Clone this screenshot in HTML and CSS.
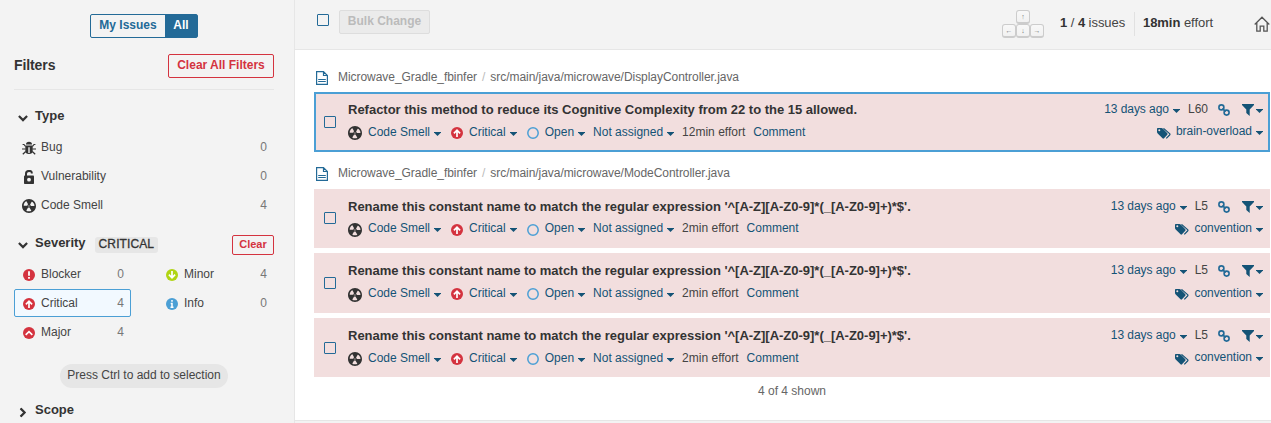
FILE: index.html
```html
<!DOCTYPE html>
<html lang="en">
<head>
<meta charset="utf-8">
<title>Issues</title>
<link rel="stylesheet" href="styles.css">
</head>
<body>
<svg class="defs" aria-hidden="true">
  <symbol id="smell" viewBox="2 2 12 12"><path fill="#333" d="M8 2C4.7 2 2 4.7 2 8s2.7 6 6 6 6-2.7 6-6-2.7-6-6-6zm-.5 5.5h.9v.9h-.9v-.9zm-3.8.2c-.1 0-.2-.1-.2-.2 0-.4.1-1.2.6-2S5.3 4.2 5.6 4c.2 0 .3 0 .3.1l1.3 2.3c0 .1 0 .2-.1.2-.1.2-.2.3-.3.5-.1.2-.2.4-.2.5 0 .1-.1.2-.2.2l-2.7-.1zM9.9 12c-.3.2-1.1.5-2 .5-.9 0-1.7-.3-2-.5-.1 0-.1-.2-.1-.3l1.3-2.3c0-.1.1-.1.2-.1.2.1.3.1.5.1s.4 0 .5-.1c.1 0 .2 0 .2.1l1.3 2.3c.2.2.2.3.1.3zm2.5-4.1L9.7 8c-.1 0-.2-.1-.2-.2 0-.2-.1-.4-.2-.5 0-.1-.2-.3-.3-.4-.1 0-.1-.1 0-.2l1.3-2.3c.1-.1.2-.1.3-.1.3.2 1 .7 1.5 1.5s.6 1.6.6 2c0 0-.1.1-.3.1z"/></symbol>
  <symbol id="critical" viewBox="0 0 12 12"><circle cx="6" cy="6" r="6" fill="#d4333f"/><path d="M6 10V3.400M2.900 6.300L6 3.200l3.100 3.100" fill="none" stroke="#fff" stroke-width="1.700"/></symbol>
  <symbol id="open" viewBox="0 0 12 12"><circle cx="6" cy="6" r="5.200" fill="none" stroke="#4b9fd5" stroke-width="1.500"/></symbol>
  <symbol id="caret" viewBox="0 0 7 4"><path d="M0 0h7v.600L3.500 4 0 .600z" fill="#145376"/></symbol>
  <symbol id="chain" viewBox="0 0 12 12"><g fill="none" stroke="#236a97" stroke-width="1.600"><circle cx="3.400" cy="3.400" r="2.500"/><circle cx="8.600" cy="8.600" r="2.500"/><path d="M4.400 4.400l3.200 3.200"/></g></symbol>
  <symbol id="funnel" viewBox="0 0 12 12"><path d="M0 0h12v1L7.700 5.600V12L4.300 9V5.600L0 1z" fill="#145376"/></symbol>
  <symbol id="tags" viewBox="0 0 14 11"><path fill="#145376" fill-rule="evenodd" d="M0 .8Q0 0 .8 0H4.400Q5.200 0 6 .8L10.300 5.200Q11 6 10.300 6.800L7 10.300Q6.300 11 5.500 10.300L.7 5.500Q0 4.800 0 4zM2.300 1.300a1 1 0 1 0 0 2 1 1 0 0 0 0-2z"/><path d="M6.500.4L12.600 5.600Q13.300 6.300 12.600 7L9.300 10.400" fill="none" stroke="#145376" stroke-width="1.200"/></symbol>
  <symbol id="file" viewBox="0 0 12 14"><path d="M.6.6H7.500L11.400 4.500V13.400H.6zM7.500.6V4.500H11.400M2.200 8.500h7.600M2.200 10.500h7.600" fill="none" stroke="#236a97" stroke-width="1.200"/></symbol>
  <symbol id="chev" viewBox="0 0 10 7"><path d="M.9 1L5 5.100 9.100 1" fill="none" stroke="#333" stroke-width="2.200"/></symbol>
</svg>
<div class="app">
  <aside class="side">
    <div class="toggle"><span class="mine">My Issues</span><span class="all">All</span></div>
    <div class="filters"><b>Filters</b><span class="red-btn">Clear All Filters</span></div>
    <div class="facet-head type"><svg class="chev"><use href="#chev"/></svg><b>Type</b></div>
    <div class="facet"><svg class="ico" viewBox="0 0 14 14"><path fill="#333" d="M4 3.500Q4 .8 7 .8T10 3.500zM3.300 4.500h7.400V10Q10.700 13 7 13T3.300 10z"/><path d="M7 6.200V12" stroke="#f3f3f3" stroke-width="1.400"/><path d="M.6 3.500H2L3.500 5.500M13.400 3.500H12L10.500 5.500M0 8H3.500M10.500 8H14M.8 13.300L3.700 10.500M13.200 13.300L10.300 10.500" fill="none" stroke="#333" stroke-width="1.200"/></svg><span>Bug</span><i>0</i></div>
    <div class="facet"><svg class="ico" viewBox="0 0 14 14"><path d="M4 6V3.800Q4 .9 7 .9T9.800 3.500" fill="none" stroke="#333" stroke-width="2"/><path fill="#333" d="M3 5.500H11.200Q12 5.500 12 6.300V13.200Q12 14 11.200 14H2.800Q2 14 2 13.200V6.300Q2 5.500 3 5.500z"/><circle cx="7" cy="9.700" r="1.900" fill="#f3f3f3"/></svg><span>Vulnerability</span><i>0</i></div>
    <div class="facet"><svg class="ico"><use href="#smell"/></svg><span>Code Smell</span><i>4</i></div>
    <div class="facet-head severity"><svg class="chev"><use href="#chev"/></svg><b>Severity</b><span class="badge">CRITICAL</span><span class="red-btn small">Clear</span></div>
    <div class="sev-grid">
      <div class="sev"><svg class="dot" viewBox="0 0 12 12"><circle cx="6" cy="6" r="6" fill="#d4333f"/><path d="M6 2.200V6.800M6 8v1.800" stroke="#fff" stroke-width="1.800"/></svg><span>Blocker</span><i>0</i></div>
      <div class="sev"><svg class="dot" viewBox="0 0 12 12"><circle cx="6" cy="6" r="6" fill="#b0d513"/><path d="M6 2v6.600M2.900 5.700L6 8.800l3.100-3.100" fill="none" stroke="#fff" stroke-width="1.700"/></svg><span>Minor</span><i>4</i></div>
      <div class="sev active"><svg class="dot"><use href="#critical"/></svg><span>Critical</span><i>4</i></div>
      <div class="sev"><svg class="dot" viewBox="0 0 12 12"><circle cx="6" cy="6" r="6" fill="#4b9fd5"/><path d="M6 2.100v1.700M4.700 5.500H6V9M4.500 9.300h3" fill="none" stroke="#fff" stroke-width="1.500"/></svg><span>Info</span><i>0</i></div>
      <div class="sev"><svg class="dot" viewBox="0 0 12 12"><circle cx="6" cy="6" r="6" fill="#d4333f"/><path d="M2.700 7.800L6 4.600l3.300 3.200" fill="none" stroke="#fff" stroke-width="1.700"/></svg><span>Major</span><i>4</i></div>
    </div>
    <div class="hint">Press Ctrl to add to selection</div>
    <div class="facet-head scope"><svg class="chev right"><use href="#chev"/></svg><b>Scope</b></div>
  </aside>
  <main class="main">
    <header class="bar">
      <span class="check"></span><span class="bulk">Bulk Change</span>
      <span class="keys"><span class="key up">↑</span><span class="key">←</span><span class="key">↓</span><span class="key">→</span></span>
      <span class="count"><b>1</b> / <b>4</b> issues</span>
      <span class="effort"><b>18min</b> effort</span>
      <svg class="home" viewBox="0 0 16 16"><path d="M.7 8.500L8 1.200l7.300 7.300M2.800 7v8.200H6.200V10.200h3.600v5h3.400V7" fill="none" stroke="#555" stroke-width="1.300"/></svg>
    </header>
    <section class="list">
      <div class="path"><svg class="file"><use href="#file"/></svg><span>Microwave_Gradle_fbinfer</span><em>/</em><span>src/main/java/microwave/DisplayController.java</span></div>
      <article class="issue selected">
        <span class="check"></span>
        <div class="body">
          <div class="title"><b>Refactor this method to reduce its Cognitive Complexity from 22 to the 15 allowed.</b></div>
          <div class="meta"><svg class="ico"><use href="#smell"/></svg><a>Code Smell</a><svg class="caret"><use href="#caret"/></svg><svg class="dot"><use href="#critical"/></svg><a>Critical</a><svg class="caret"><use href="#caret"/></svg><svg class="dot"><use href="#open"/></svg><a>Open</a><svg class="caret"><use href="#caret"/></svg><a class="assignee">Not assigned</a><svg class="caret"><use href="#caret"/></svg><span class="time">12min effort</span><a>Comment</a></div>
        </div>
        <div class="aside">
          <div class="line"><a>13 days ago</a><svg class="caret"><use href="#caret"/></svg><span class="ln">L60</span><svg class="chain"><use href="#chain"/></svg><svg class="funnel"><use href="#funnel"/></svg><svg class="caret tight"><use href="#caret"/></svg></div>
          <div class="line tagline"><svg class="tags"><use href="#tags"/></svg><a>brain-overload</a><svg class="caret"><use href="#caret"/></svg></div>
        </div>
      </article>
      <div class="path second"><svg class="file"><use href="#file"/></svg><span>Microwave_Gradle_fbinfer</span><em>/</em><span>src/main/java/microwave/ModeController.java</span></div>
      <article class="issue">
        <span class="check"></span>
        <div class="body">
          <div class="title"><b>Rename this constant name to match the regular expression '^[A-Z][A-Z0-9]*(_[A-Z0-9]+)*$'.</b></div>
          <div class="meta"><svg class="ico"><use href="#smell"/></svg><a>Code Smell</a><svg class="caret"><use href="#caret"/></svg><svg class="dot"><use href="#critical"/></svg><a>Critical</a><svg class="caret"><use href="#caret"/></svg><svg class="dot"><use href="#open"/></svg><a>Open</a><svg class="caret"><use href="#caret"/></svg><a class="assignee">Not assigned</a><svg class="caret"><use href="#caret"/></svg><span class="time">2min effort</span><a>Comment</a></div>
        </div>
        <div class="aside">
          <div class="line"><a>13 days ago</a><svg class="caret"><use href="#caret"/></svg><span class="ln">L5</span><svg class="chain"><use href="#chain"/></svg><svg class="funnel"><use href="#funnel"/></svg><svg class="caret tight"><use href="#caret"/></svg></div>
          <div class="line tagline"><svg class="tags"><use href="#tags"/></svg><a>convention</a><svg class="caret"><use href="#caret"/></svg></div>
        </div>
      </article>
      <article class="issue">
        <span class="check"></span>
        <div class="body">
          <div class="title"><b>Rename this constant name to match the regular expression '^[A-Z][A-Z0-9]*(_[A-Z0-9]+)*$'.</b></div>
          <div class="meta"><svg class="ico"><use href="#smell"/></svg><a>Code Smell</a><svg class="caret"><use href="#caret"/></svg><svg class="dot"><use href="#critical"/></svg><a>Critical</a><svg class="caret"><use href="#caret"/></svg><svg class="dot"><use href="#open"/></svg><a>Open</a><svg class="caret"><use href="#caret"/></svg><a class="assignee">Not assigned</a><svg class="caret"><use href="#caret"/></svg><span class="time">2min effort</span><a>Comment</a></div>
        </div>
        <div class="aside">
          <div class="line"><a>13 days ago</a><svg class="caret"><use href="#caret"/></svg><span class="ln">L5</span><svg class="chain"><use href="#chain"/></svg><svg class="funnel"><use href="#funnel"/></svg><svg class="caret tight"><use href="#caret"/></svg></div>
          <div class="line tagline"><svg class="tags"><use href="#tags"/></svg><a>convention</a><svg class="caret"><use href="#caret"/></svg></div>
        </div>
      </article>
      <article class="issue">
        <span class="check"></span>
        <div class="body">
          <div class="title"><b>Rename this constant name to match the regular expression '^[A-Z][A-Z0-9]*(_[A-Z0-9]+)*$'.</b></div>
          <div class="meta"><svg class="ico"><use href="#smell"/></svg><a>Code Smell</a><svg class="caret"><use href="#caret"/></svg><svg class="dot"><use href="#critical"/></svg><a>Critical</a><svg class="caret"><use href="#caret"/></svg><svg class="dot"><use href="#open"/></svg><a>Open</a><svg class="caret"><use href="#caret"/></svg><a class="assignee">Not assigned</a><svg class="caret"><use href="#caret"/></svg><span class="time">2min effort</span><a>Comment</a></div>
        </div>
        <div class="aside">
          <div class="line"><a>13 days ago</a><svg class="caret"><use href="#caret"/></svg><span class="ln">L5</span><svg class="chain"><use href="#chain"/></svg><svg class="funnel"><use href="#funnel"/></svg><svg class="caret tight"><use href="#caret"/></svg></div>
          <div class="line tagline"><svg class="tags"><use href="#tags"/></svg><a>convention</a><svg class="caret"><use href="#caret"/></svg></div>
        </div>
      </article>
      <div class="shown">4 of 4 shown</div>
    </section>
  </main>
</div>
</body>
</html>
```
FILE: styles.css
```css
* { box-sizing: border-box; }
body { margin: 0; font: 12px/16px "Liberation Sans", Arial, sans-serif; color: #444; background: #f3f3f3; }
svg { display: block; flex: none; }
.defs { position: absolute; width: 0; height: 0; }
.app { display: flex; width: 1271px; height: 423px; overflow: hidden; }
b { color: #333; }
i, em { font-style: normal; }

/* Sidebar */
.side { width: 295px; height: 423px; flex: none; padding: 14px 20px 0 14px; border-right: 1px solid #e6e6e6; background: #f3f3f3; }
.toggle { display: flex; width: 108px; height: 24px; margin-left: 76px; border: 1px solid #236a97; border-radius: 2px; font-weight: bold; line-height: 21px; text-align: center; color: #236a97; }
.mine { width: 74px; }
.all { flex: 1; background: #236a97; color: #fff; }
.filters { display: flex; justify-content: space-between; height: 52px; padding-top: 16px; border-bottom: 1px solid #e6e6e6; }
.filters b { font-size: 14px; line-height: 22px; letter-spacing: -.1px; }
.red-btn { width: 106px; height: 24px; border: 1px solid #d4333f; border-radius: 2px; font-weight: bold; line-height: 21px; text-align: center; color: #d4333f; }
.red-btn.small { width: 42px; height: 20px; margin-left: auto; font-size: 11px; line-height: 17px; }
.facet-head { display: flex; height: 20px; padding-left: 4px; }
.facet-head b { font-size: 13px; line-height: 16px; margin-left: 7px; }
.chev { width: 10px; height: 7px; margin-top: 7px; }
.chev.right { transform: rotate(-90deg); }
.type { margin-top: 18px; margin-bottom: 5px; }
.facet, .sev { display: flex; height: 29px; padding: 0 7px 0 8px; line-height: 29px; }
.facet svg { margin: 8px 5px 0 0; }
.facet i, .sev i { margin-left: auto; color: #777; }
.ico { width: 14px; height: 14px; }
.dot { width: 12px; height: 12px; }
.severity { margin-top: 15px; height: 20px; }
.severity b { line-height: 16px; }
.badge { height: 16px; margin: 2px 0 0 9px; padding: 0 4px; border-radius: 3px; background: #e6e6e6; color: #333; line-height: 15px; letter-spacing: .1px; -webkit-text-stroke: .3px #333; }
.sev-grid { display: grid; grid-template-columns: 117px 117px; column-gap: 26px; margin-top: 5px; }
.sev { border: 1px solid transparent; border-radius: 2px; padding: 0 6px 0 8px; line-height: 27px; }
.sev svg { margin: 8px 6px 0 0; }
.sev.active { height: 28px; border-color: #4b9fd5; background: #f2f9ff; }
.hint { width: 168px; height: 24px; margin: 17px 0 0 46px; border-radius: 12px; background: #e6e6e6; text-align: center; line-height: 22px; }
.scope { margin-top: 14px; }

/* Toolbar */
.main { flex: 1; min-width: 0; }
.bar { display: flex; width: 976px; height: 50px; padding: 10px 0 0 22px; border-bottom: 1px solid #e6e6e6; background: #f3f3f3; }
.check { flex: none; width: 12px; height: 12px; border: 1px solid #236a97; border-radius: 1px; }
.bar .check { margin-top: 4px; }
.bulk { width: 91px; height: 24px; margin-left: 10px; border: 1px solid #ddd; border-radius: 2px; background: #ebebeb; color: #bbb; font-weight: bold; line-height: 20px; text-align: center; }
.keys { display: grid; grid-template-columns: 14px 14px 14px; grid-template-rows: 14px 14px; width: 42px; height: 28px; margin-left: 572px; }
.key { height: 14px; border: 1px solid #ccc; border-bottom-width: 2px; border-radius: 3px; background: linear-gradient(#f8f8f8, #f1f1f1); font-size: 7px; line-height: 11px; text-align: center; color: #777; }
.key.up { grid-column: 1 / 4; width: 14px; margin-left: 14px; }
.count { width: 75px; margin: 2px 0 0 16px; height: 24px; border-right: 1px solid #e1e1e1; }
.effort { width: 111px; margin: 2px 0 0 8px; }
.count, .effort { font-size: 13px; line-height: 21px; letter-spacing: -.05px; white-space: nowrap; }
.home { width: 16px; height: 16px; margin-top: 6px; }

/* Issues */
.list { height: 371px; padding: 19px 1px 0 19px; background: #fff; border-bottom: 1px solid #e6e6e6; }
.path { display: flex; height: 23px; color: #666; line-height: 17px; letter-spacing: -.045px; }
.path.second { height: 28.6px; margin-top: 8px; padding-top: 5px; }
.path em { margin: 0 5px; color: #bbb; }
.file { width: 12px; height: 14px; margin: 2px 10px 0 2px; }
.issue { display: flex; height: 59.6px; margin-bottom: 5px; padding: 0 7px 0 10px; background: #f2dede; }
.issue .check { margin: 23.8px 12px 0 0; }
.selected { height: 60px; margin: 0; padding: 0 5px 0 8px; border: 2px solid #4b9fd5; }
.selected .check { margin-top: 22px; }
.body { flex: 1; padding-top: 9px; white-space: nowrap; }
.selected .body { padding-top: 7px; }
.title { height: 22.8px; font-size: 13px; line-height: 18px; }
.title b { letter-spacing: -.012px; }
.meta { display: flex; height: 16px; line-height: 17px; }
a { color: #145376; }
.meta .ico { margin: 2.6px 6px 0 0; }
.meta .dot { margin: 3.4px 6px 0 10px; }
.caret { width: 7px; height: 4px; margin: 8px 0 0 4px; }
.assignee { margin-left: 8px; }
.time { margin: 0 8px; }
.aside { padding-top: 9px; white-space: nowrap; }
.selected .aside { padding-top: 7px; }
.line { display: flex; justify-content: flex-end; height: 22.4px; line-height: 16px; }
.line .caret { margin-top: 8px; }
.ln { margin: 0 10px 0 8px; }
.line > a { letter-spacing: -.05px; }
.chain { width: 12px; height: 12px; margin: 3px 12px 0 0; }
.funnel { width: 12px; height: 12px; margin-top: 3px; }
.line .tight { margin-left: 2px; }
.tagline { line-height: 17px; }
.tags { width: 14px; height: 11px; margin: 4.5px 5px 0 0; }
.shown { margin-top: 1px; text-align: center; color: #666; line-height: 18px; }
```
